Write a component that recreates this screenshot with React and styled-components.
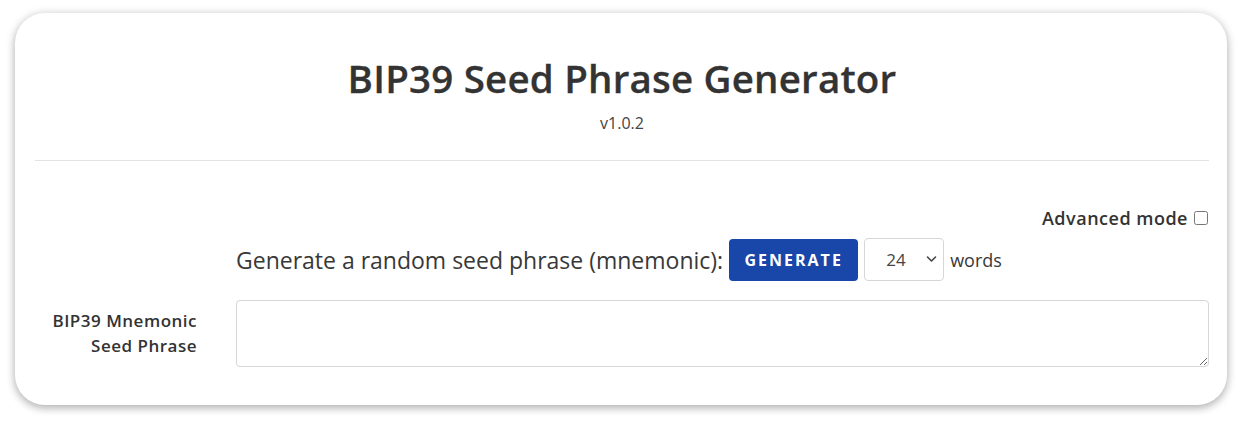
import React from 'react'
import styled, { createGlobalStyle } from 'styled-components'

const GlobalStyle = createGlobalStyle`
  html, body {
    margin: 0;
    padding: 0;
    background: #fff;
  }
  body {
    font-family: 'Open Sans', 'Liberation Sans', sans-serif;
    color: #333;
  }
`

const Page = styled.div`
  padding: 13px 18px 20px 15px;
`

const Card = styled.div`
  background: #fff;
  border-radius: 30px;
  box-shadow: 0 3px 8px rgba(0, 0, 0, 0.28), 0 0 12px rgba(0, 0, 0, 0.08);
  padding: 0 18px 0 20px;
  height: 392px;
  box-sizing: border-box;
`

const Header = styled.header`
  text-align: center;
  padding-top: 43px;
  padding-bottom: 27px;
  border-bottom: 1px solid #e3e3e3;
`

const Title = styled.h1`
  margin: 0;
  font-size: 38.5px;
  font-weight: 600;
  letter-spacing: 0.2px;
  line-height: 44px;
  color: #333;
  -webkit-text-stroke: 0.3px #333;
`

const Version = styled.div`
  margin-top: 13px;
  font-size: 16px;
  line-height: 20px;
  color: #444;
`

const Body = styled.div`
  padding-top: 45px;
  display: flex;
  flex-direction: column;
`

const AdvancedRow = styled.label`
  align-self: flex-end;
  display: flex;
  align-items: center;
  gap: 6px;
  font-size: 18px;
  font-weight: 600;
  letter-spacing: 0.5px;
  color: #333;
  height: 24px;
`

const Checkbox = styled.input`
  width: 14px;
  height: 14px;
  margin: 0 1px 0 0;
`

const FormRow = styled.div`
  display: grid;
  grid-template-columns: 162px 1fr;
  column-gap: 39px;
  align-items: ${p => p.$align || 'center'};
  margin-top: ${p => p.$top || 0}px;
`

const Label = styled.div`
  text-align: right;
  font-size: 17px;
  font-weight: 600;
  letter-spacing: 0.5px;
  line-height: 25px;
  color: #333;
  padding-top: 8px;
`

const Controls = styled.div`
  display: flex;
  align-items: center;
  gap: 6px;
  grid-column: ${p => p.$col || 'auto'};
`

const Prompt = styled.span`
  font-size: 23px;
  color: #383838;
`

const Button = styled.button`
  background: #1846a9;
  color: #fff;
  border: none;
  border-radius: 4px;
  height: 42px;
  width: 129px;
  font-family: inherit;
  font-size: 16px;
  font-weight: 700;
  letter-spacing: 2px;
`

const SelectWrap = styled.div`
  position: relative;
  width: 80px;
  height: 43px;
`

const Select = styled.select`
  appearance: none;
  width: 100%;
  height: 100%;
  border: 1px solid #d6d6d6;
  border-radius: 4px;
  background: #fff;
  font-family: inherit;
  font-size: 17px;
  color: #444;
  padding-left: 21px;
`

const Chevron = styled.svg`
  position: absolute;
  right: 7px;
  top: 17px;
  pointer-events: none;
`

const Words = styled.span`
  font-size: 18px;
  color: #383838;
`

const TextArea = styled.textarea`
  height: 67px;
  box-sizing: border-box;
  border: 1px solid #d6d6d6;
  border-radius: 4px;
  resize: vertical;
  width: 100%;
  margin: 0;
  font-family: inherit;
`

export default function App () {
  return (
    <>
      <GlobalStyle />
      <Page>
        <Card>
          <Header>
            <Title>BIP39 Seed Phrase Generator</Title>
            <Version>v1.0.2</Version>
          </Header>
          <Body>
            <AdvancedRow>
              Advanced mode
              <Checkbox type='checkbox' />
            </AdvancedRow>
            <FormRow $top={8}>
              <Controls $col='2'>
                <Prompt>Generate a random seed phrase (mnemonic):</Prompt>
                <Button>GENERATE</Button>
                <SelectWrap>
                  <Select defaultValue='24'>
                    <option>12</option>
                    <option>15</option>
                    <option>18</option>
                    <option>21</option>
                    <option>24</option>
                  </Select>
                  <Chevron width='11' height='8' viewBox='0 0 11 8'>
                    <path d='M1.5 2 L5.5 6 L9.5 2' fill='none' stroke='#444' strokeWidth='1.6' strokeLinecap='round' strokeLinejoin='round' />
                  </Chevron>
                </SelectWrap>
                <Words>words</Words>
              </Controls>
            </FormRow>
            <FormRow $top={19} $align='start'>
              <Label>BIP39 Mnemonic<br />Seed Phrase</Label>
              <TextArea />
            </FormRow>
          </Body>
        </Card>
      </Page>
    </>
  )
}
